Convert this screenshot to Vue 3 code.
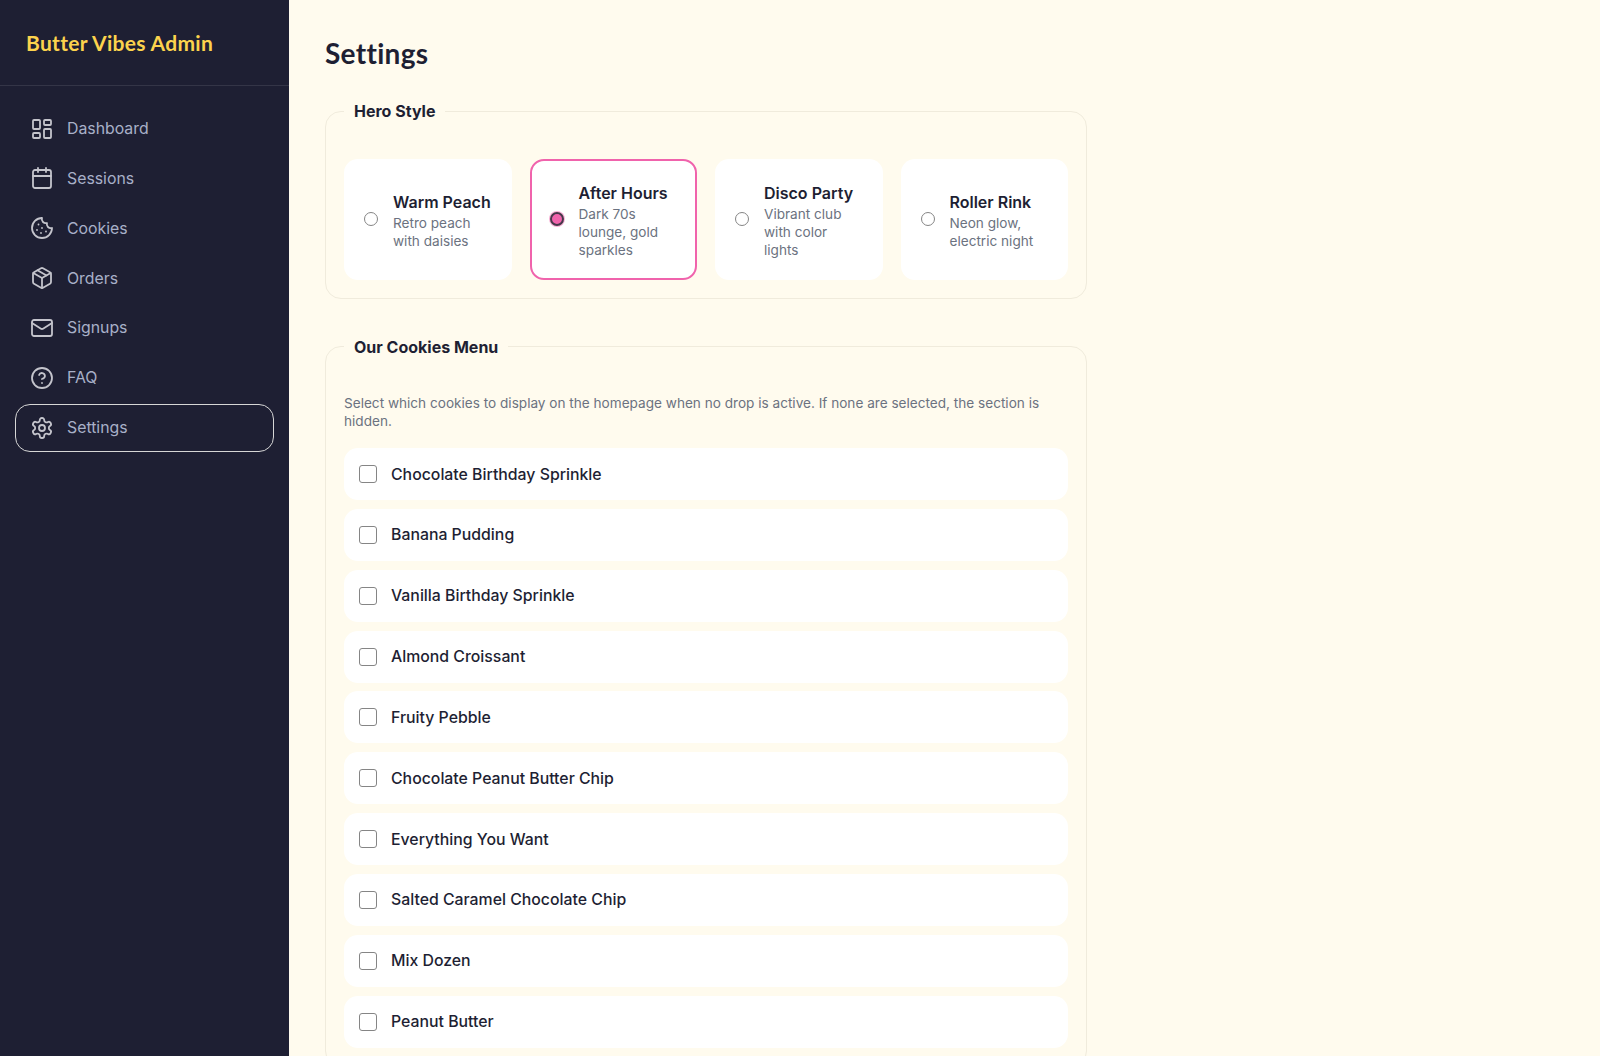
<template>
  <div class="admin">
    <aside class="sidebar">
      <div class="brand">Butter Vibes Admin</div>
      <nav class="nav">
        <a v-for="item in navItems" :key="item.label" class="nav-item" :class="{ active: item.label === 'Settings' }">
          <svg class="nav-icon" viewBox="0 0 24 24" fill="none" stroke="currentColor" stroke-linecap="round" stroke-linejoin="round">
            <rect v-for="(r, i) in item.rects" :key="'r' + i" :x="r[0]" :y="r[1]" :width="r[2]" :height="r[3]" :rx="r[4]" />
            <circle v-for="(c, i) in item.circles" :key="'c' + i" cx="12" cy="12" :r="c" />
            <path v-for="(d, i) in item.paths" :key="'p' + i" :d="d" />
          </svg>
          <span>{{ item.label }}</span>
        </a>
      </nav>
    </aside>

    <main class="main">
      <h1>Settings</h1>

      <fieldset class="group">
        <legend>Hero Style</legend>
        <div class="hero-grid">
          <label v-for="h in heroStyles" :key="h.name" class="hero-card" :class="{ selected: h.name === heroStyle }">
            <input type="radio" name="hero" :value="h.name" v-model="heroStyle" />
            <span class="hero-text">
              <strong>{{ h.name }}</strong>
              <small>{{ h.desc }}</small>
            </span>
          </label>
        </div>
      </fieldset>

      <fieldset class="group">
        <legend>Our Cookies Menu</legend>
        <p class="intro">Select which cookies to display on the homepage when no drop is active. If none are selected, the section is hidden.</p>
        <div class="cookie-list">
          <label v-for="c in cookies" :key="c" class="cookie-row">
            <input type="checkbox" />
            <span>{{ c }}</span>
          </label>
        </div>
      </fieldset>
    </main>
  </div>
</template>

<script setup>
import { ref } from 'vue'

const heroStyle = ref('After Hours')

const navItems = [
  { label: 'Dashboard', rects: [[3, 3, 7, 9, 1], [14, 3, 7, 5, 1], [14, 12, 7, 9, 1], [3, 16, 7, 5, 1]] },
  { label: 'Sessions', rects: [[3, 4, 18, 18, 2]], paths: ['M8 2v4', 'M16 2v4', 'M3 10h18'] },
  { label: 'Cookies', paths: ['M12 2a10 10 0 1 0 10 10 4 4 0 0 1-5-5 4 4 0 0 1-5-5', 'M8.5 8.5v.01', 'M16 15.5v.01', 'M12 12v.01', 'M11 17v.01', 'M7 14v.01'] },
  { label: 'Orders', paths: ['M11 21.73a2 2 0 0 0 2 0l7-4A2 2 0 0 0 21 16V8a2 2 0 0 0-1-1.73l-7-4a2 2 0 0 0-2 0l-7 4A2 2 0 0 0 3 8v8a2 2 0 0 0 1 1.73z', 'M12 22V12', 'M3.3 7 12 12l8.7-5', 'm7.5 4.27 9 5.15'] },
  { label: 'Signups', rects: [[2, 4, 20, 16, 2]], paths: ['m22 7-8.97 5.7a1.94 1.94 0 0 1-2.06 0L2 7'] },
  { label: 'FAQ', circles: [10], paths: ['M9.09 9a3 3 0 0 1 5.83 1c0 2-3 3-3 3', 'M12 17h.01'] },
  { label: 'Settings', circles: [3], paths: ['M12.22 2h-.44a2 2 0 0 0-2 2v.18a2 2 0 0 1-1 1.73l-.43.25a2 2 0 0 1-2 0l-.15-.08a2 2 0 0 0-2.73.73l-.22.38a2 2 0 0 0 .73 2.73l.15.1a2 2 0 0 1 1 1.72v.51a2 2 0 0 1-1 1.74l-.15.09a2 2 0 0 0-.73 2.73l.22.38a2 2 0 0 0 2.73.73l.15-.08a2 2 0 0 1 2 0l.43.25a2 2 0 0 1 1 1.73V20a2 2 0 0 0 2 2h.44a2 2 0 0 0 2-2v-.18a2 2 0 0 1 1-1.73l.43-.25a2 2 0 0 1 2 0l.15.08a2 2 0 0 0 2.73-.73l.22-.39a2 2 0 0 0-.73-2.73l-.15-.08a2 2 0 0 1-1-1.74v-.5a2 2 0 0 1 1-1.74l.15-.09a2 2 0 0 0 .73-2.73l-.22-.38a2 2 0 0 0-2.73-.73l-.15.08a2 2 0 0 1-2 0l-.43-.25a2 2 0 0 1-1-1.73V4a2 2 0 0 0-2-2z'] }
]

const heroStyles = [
  { name: 'Warm Peach', desc: 'Retro peach with daisies' },
  { name: 'After Hours', desc: 'Dark 70s lounge, gold sparkles' },
  { name: 'Disco Party', desc: 'Vibrant club with color lights' },
  { name: 'Roller Rink', desc: 'Neon glow, electric night' }
]

const cookies = [
  'Chocolate Birthday Sprinkle',
  'Banana Pudding',
  'Vanilla Birthday Sprinkle',
  'Almond Croissant',
  'Fruity Pebble',
  'Chocolate Peanut Butter Chip',
  'Everything You Want',
  'Salted Caramel Chocolate Chip',
  'Mix Dozen',
  'Peanut Butter'
]
</script>

<style>
html, body { height: 100%; overflow: hidden; }
</style>

<style scoped>
.admin {
  display: flex; height: 100vh; overflow: hidden;
  font-family: Inter, "Liberation Sans", sans-serif; color: #1e1e32;
}
.sidebar { width: 289px; flex-shrink: 0; background: #1e1f33; }
.brand {
  height: 86px; padding: 0 26px; display: flex; align-items: center; box-sizing: border-box;
  font-family: Lato, sans-serif; font-weight: 700; font-size: 21px; letter-spacing: 0.3px; color: #fcd34d;
  border-bottom: 1px solid rgba(255,255,255,0.1);
}
.nav { display: flex; flex-direction: column; gap: 3.85px; padding: 19.5px 16px; }
.nav-item {
  display: flex; align-items: center; gap: 13px; height: 46px; padding: 0 14px;
  border-radius: 14px; color: #a8b0c8; font-size: 15.84px;
}
.nav-item.active { outline: 1.5px solid #d6d6d6; outline-offset: 0.5px; }
.nav-icon { width: 24px; height: 24px; color: #c4c4cc; flex-shrink: 0; stroke-width: 1.8; }

.main {
  flex: 1; overflow-y: scroll; padding: 36px; box-sizing: border-box; background: #fffbee;
}
.main::-webkit-scrollbar { width: 2px; }
.main::-webkit-scrollbar-track { background: #333; }
.main::-webkit-scrollbar-thumb { background: #333; }
h1 {
  margin: 0 0 31px; font-family: Lato, sans-serif; font-size: 28px; line-height: 34px; font-weight: 700; letter-spacing: 0.3px; color: #1e1f33;
}
.group {
  width: 762px; box-sizing: border-box; margin: 0 0 37.5px; padding: 18px;
  border: 1px solid #f0ebdc; border-radius: 16px; min-width: 0;
}
legend { padding: 0 10px; margin-bottom: 20px; font-size: 16px; line-height: 20px; font-weight: 700; color: #1e1f33; }
.hero-grid { display: grid; grid-template-columns: repeat(4, minmax(0, 1fr)); gap: 18px; }
.hero-card {
  display: flex; align-items: center; gap: 12px; padding: 21px 20px 19px 14px; background: #fff;
  border: 2px solid transparent; border-radius: 14px; box-sizing: border-box;
}
.hero-card.selected { border-color: #f063ac; }
.hero-card input {
  appearance: none; width: 14px; height: 14px; margin: 1px 3px 5px 4px; flex-shrink: 0;
  border: 1.7px solid #858585; border-radius: 50%; background: #fff; box-sizing: border-box;
}
.hero-card input:checked { border: 2px solid #47384a; background: #f063ac; box-shadow: 0 0 0 1px rgba(240,99,172,0.5); }
.hero-text { display: flex; flex-direction: column; min-width: 0; }
.hero-text strong { font-size: 16px; line-height: 22px; margin-bottom: 1px; font-weight: 600; color: #1e1f33; white-space: nowrap; }
.hero-text small { font-size: 13.6px; line-height: 18px; color: #6b7280; }
.intro { margin: -1px 0 18.5px; font-size: 13.6px; line-height: 18px; color: #6b7280; }
.cookie-list { display: flex; flex-direction: column; gap: 8.85px; }
.cookie-row {
  display: flex; align-items: center; gap: 14px; height: 52px; padding: 0 15px; box-sizing: border-box;
  background: #fff; border-radius: 14px; font-size: 15.84px; font-weight: 500; color: #1e1f33;
}
.cookie-row input {
  appearance: none; width: 18px; height: 18px; margin: 0; flex-shrink: 0;
  border: 1.5px solid #858585; border-radius: 3px; background: #fff; box-sizing: border-box;
}
</style>
